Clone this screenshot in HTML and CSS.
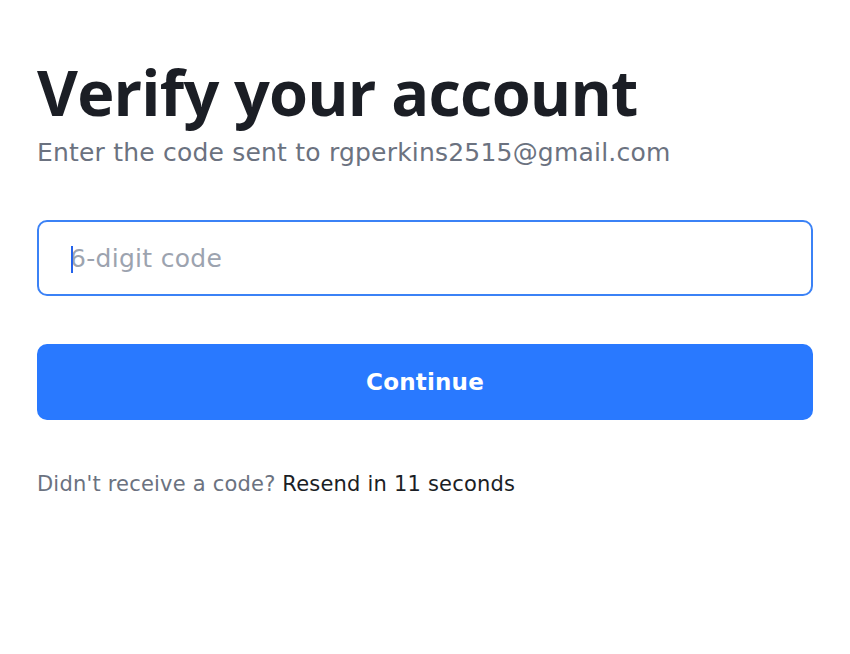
FILE: index.html
```html
<!DOCTYPE html>
<html lang="en">
<head>
<meta charset="utf-8">
<title>Verify your account</title>
<link rel="stylesheet" href="styles.css">
</head>
<body>
<main class="page">
  <h1 class="title">Verify your account</h1>
  <p class="subtitle">Enter the code sent to rgperkins2515@gmail.com</p>
  <form class="form">
    <div class="field"><span class="caret"></span><span class="placeholder">6-digit code</span></div>
    <button type="button" class="btn">Continue</button>
  </form>
  <p class="resend">Didn't receive a code? <span class="resend-timer">Resend in 11 seconds</span></p>
</main>
</body>
</html>
```

FILE: styles.css
```css
html, body {
  margin: 0;
  padding: 0;
  background: #ffffff;
}
body {
  font-family: "DejaVu Sans", "Noto Sans", sans-serif;
}
.page {
  width: 776px;
  padding: 56px 0 0 37px;
}
.title {
  margin: 0;
  font-family: "Open Sans", "Noto Sans", sans-serif;
  font-size: 63px;
  line-height: 72px;
  font-weight: 700;
  color: #1b1e25;
  letter-spacing: -0.8px;
}
.subtitle {
  margin: 10px 0 0;
  font-size: 25px;
  line-height: 30px;
  color: #6b7280;
  letter-spacing: 0.2px;
}
.form {
  margin-top: 52px;
  display: flex;
  flex-direction: column;
  gap: 48px;
}
.field {
  box-sizing: border-box;
  height: 76px;
  border: 2px solid #3b82f6;
  border-radius: 10px;
  display: flex;
  align-items: center;
  padding-left: 31px;
  position: relative;
}
.placeholder {
  font-size: 25px;
  color: #9ca3af;
  letter-spacing: 0.3px;
}
.caret {
  position: absolute;
  left: 32px;
  top: 24px;
  width: 2px;
  height: 27px;
  background: #2563eb;
}
.btn {
  height: 76px;
  border: none;
  border-radius: 10px;
  background: #2979ff;
  color: #ffffff;
  font-family: inherit;
  font-size: 23px;
  font-weight: 700;
  letter-spacing: 0.2px;
}
.resend {
  margin: 52px 0 0;
  font-size: 21px;
  line-height: 24px;
  color: #6b7280;
  letter-spacing: 0.2px;
}
.resend-timer {
  color: #1b1e25;
}
```
